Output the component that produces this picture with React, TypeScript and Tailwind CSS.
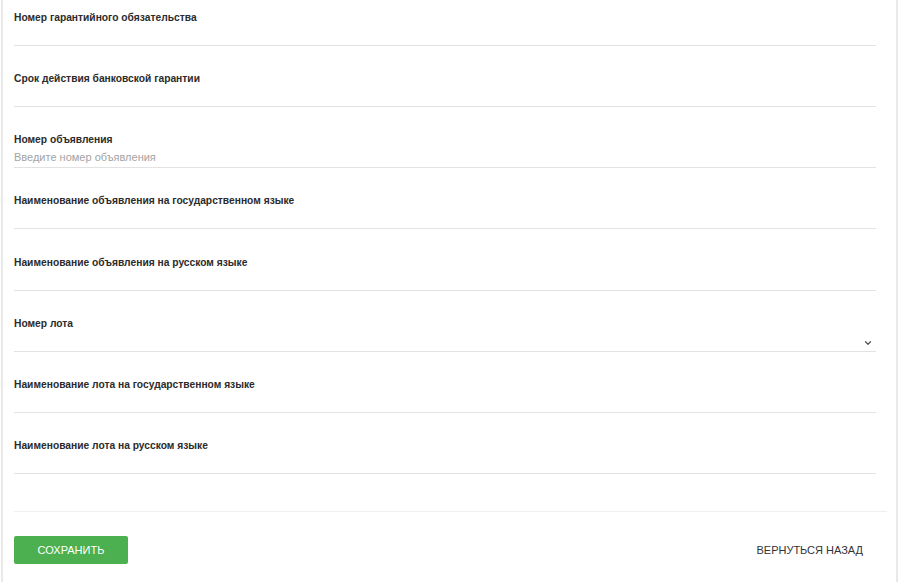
import { ChevronDown } from 'lucide-react'

type Field = {
  label: string
  placeholder?: string
  select?: boolean
}

const fields: Field[] = [
  { label: 'Номер гарантийного обязательства' },
  { label: 'Срок действия банковской гарантии' },
  { label: 'Номер объявления', placeholder: 'Введите номер объявления' },
  { label: 'Наименование объявления на государственном языке' },
  { label: 'Наименование объявления на русском языке' },
  { label: 'Номер лота', select: true },
  { label: 'Наименование лота на государственном языке' },
  { label: 'Наименование лота на русском языке' },
]

export default function App() {
  return (
    <div className="min-h-[582px] bg-white pl-px font-['Liberation_Sans',Arial,sans-serif] text-[#333]">
      <div className="min-h-[582px] w-[897px] border-x-2 border-[#e9e9e9] bg-white">
        {/* Form fields */}
        <div className="pl-[11px] pr-[20px]">
          {fields.map((f) => (
            <div key={f.label} className="pt-[11px] pb-[15.15px]">
              <label className="block text-[10.25px] font-bold leading-[14px] text-[#2b2b2b]">
                {f.label}
              </label>
              <div className="relative flex h-[21px] items-center border-b border-[#e2e2e2]">
                <input
                  className="w-full bg-transparent text-[11px] text-[#333] outline-none placeholder:text-[#a3a3a3]"
                  placeholder={f.placeholder ?? ''}
                />
                {f.select && (
                  <ChevronDown className="absolute right-[3px] top-[7px] h-[10px] w-[10px] text-[#555]" strokeWidth={3} />
                )}
              </div>
            </div>
          ))}
        </div>

        {/* Footer */}
        <div className="ml-[11px] mr-[9px] mt-[22px] flex items-center justify-between border-t border-[#f0f0f0] pt-[24px] pr-[24px]">
          <button className="h-[28px] w-[114px] rounded-[2px] bg-[#4caf50] text-[11px] uppercase text-white">
            Сохранить
          </button>
          <button className="text-[11px] uppercase text-[#333]">Вернуться назад</button>
        </div>
      </div>
    </div>
  )
}
